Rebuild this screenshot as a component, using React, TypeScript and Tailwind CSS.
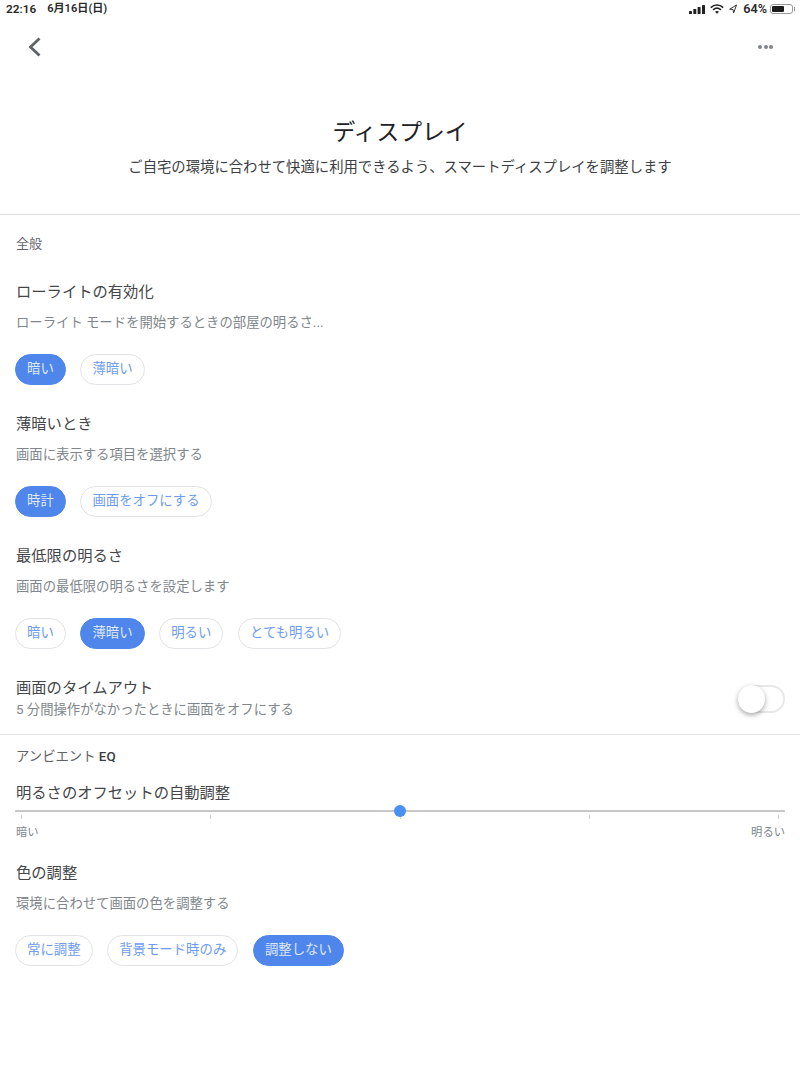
import { ReactNode } from "react";

const font = { jp: "font-['Roboto','Noto_Sans_CJK_JP',sans-serif]" };

function Chip({ label, on }: { label: string; on?: boolean }) {
    return (
        <div
            className={
                on
                    ? "h-[31px] px-3 rounded-full bg-[#4f86ec] border border-[#4f86ec] text-[#dfe9fb] text-[13.4px] flex items-center"
                    : "h-[31px] px-3 rounded-full bg-white border border-[#e2e3e6] text-[#6d9cf0] text-[13.4px] flex items-center"
            }
        >
            <span className="mx-[-1px]">{label}</span>
        </div>
    );
}

function Setting({
    title,
    desc,
    children,
}: {
    title: string;
    desc: string;
    children: ReactNode;
}) {
    return (
        <div className="px-[15px] h-[132px] flex flex-col">
            <div className="pl-[1px] h-[22px] leading-[22px] text-[15.3px] text-[#444649]">
                {title}
            </div>
            <div className="pl-[1px] mt-[10px] h-[20px] leading-[20px] text-[13.35px] text-[#80868b]">
                {desc}
            </div>
            <div className="mt-[21px] flex gap-[14.6px]">{children}</div>
        </div>
    );
}

export default function App() {
    return (
        <div
            className={`w-[800px] h-[1066px] bg-white overflow-hidden ${font.jp}`}
        >
            {/* status bar */}
            <div className="h-[19px] pl-[6px] pr-[5px] flex items-center justify-between text-[11.8px] font-semibold text-[#2a2a2a]">
                <div className="flex items-center gap-[11px]">
                    <span>22:16</span>
                    <span className="text-[11.1px]">6月16日(日)</span>
                </div>
                <div className="flex items-center">
                    <svg width="16" height="9" viewBox="0 0 16 9">
                        <rect x="0" y="6" width="3" height="3" rx="0.6" fill="#222" />
                        <rect x="4.3" y="4" width="3" height="5" rx="0.6" fill="#222" />
                        <rect x="8.6" y="2" width="3" height="7" rx="0.6" fill="#222" />
                        <rect x="13" y="0" width="3" height="9" rx="0.6" fill="#222" />
                    </svg>
                    <svg className="ml-[5px]" width="14" height="10" viewBox="0 0 14 10" fill="none" stroke="#222" strokeWidth="1.6">
                        <path d="M0.8 3.6C4.4 0.2 9.6 0.2 13.2 3.6" />
                        <path d="M3.1 5.8C5.4 3.8 8.6 3.8 10.9 5.8" />
                        <path d="M7 9.8L5 7.7C6.2 6.8 7.8 6.8 9 7.7Z" fill="#222" stroke="none" />
                    </svg>
                    <svg className="ml-[5px]" width="8" height="10" viewBox="0 0 8 10" fill="none" stroke="#333" strokeWidth="1">
                        <path d="M7.5 1L0.7 5.2L4 5.5L4.6 9Z" />
                    </svg>
                    <span className="ml-[6px] text-[12.6px]">64%</span>
                    <div className="ml-[3px] flex items-center">
                        <div className="w-[23px] h-[10px] rounded-[3px] border border-[#999] p-[1px]">
                            <div className="w-[64%] h-full rounded-[1px] bg-[#1c1c1c]" />
                        </div>
                        <div className="w-[1px] h-[4px] bg-[#999] ml-[1px]" />
                    </div>
                </div>
            </div>

            {/* nav */}
            <div className="h-[55px] pl-[28px] pr-[27px] flex items-center justify-between">
                <svg width="14" height="20" viewBox="0 0 14 20" fill="none" stroke="#5f6368" strokeWidth="2.8">
                    <path d="M11.5 1.5L2.5 10L11.5 18.5" />
                </svg>
                <div className="flex gap-[1.5px]">
                    <div className="w-[4px] h-[4px] rounded-full bg-[#80858a]" />
                    <div className="w-[4px] h-[4px] rounded-full bg-[#80858a]" />
                    <div className="w-[4px] h-[4px] rounded-full bg-[#80858a]" />
                </div>
            </div>

            {/* heading */}
            <div className="h-[141px] border-b border-[#dadce0] pt-[41px] text-center">
                <div className="h-[36px] leading-[36px] text-[22.8px] text-[#202124]">
                    ディスプレイ
                </div>
                <div className="mt-[5px] leading-[24px] text-[14.35px] text-[#3c4043]">
                    ご自宅の環境に合わせて快適に利用できるよう、スマートディスプレイを調整します
                </div>
            </div>

            <div className="h-[66px] px-[16px] pt-[19px] leading-[20px] text-[13px] text-[#5f6368]">
                全般
            </div>

            <Setting
                title="ローライトの有効化"
                desc="ローライト モードを開始するときの部屋の明るさ..."
            >
                <Chip label="暗い" on />
                <Chip label="薄暗い" />
            </Setting>
            <Setting title="薄暗いとき" desc="画面に表示する項目を選択する">
                <Chip label="時計" on />
                <Chip label="画面をオフにする" />
            </Setting>
            <Setting title="最低限の明るさ" desc="画面の最低限の明るさを設定します">
                <Chip label="暗い" />
                <Chip label="薄暗い" on />
                <Chip label="明るい" />
                <Chip label="とても明るい" />
            </Setting>

            {/* timeout row */}
            <div className="h-[58px] border-b border-[#e0e0e0] px-[16px] flex justify-between">
                <div>
                    <div className="h-[22px] leading-[22px] mb-[2px] text-[15.3px] text-[#444649]">
                        画面のタイムアウト
                    </div>
                    <div className="leading-[18px] text-[13.35px] text-[#80868b]">
                        5 分間操作がなかったときに画面をオフにする
                    </div>
                </div>
                <div className="relative mr-[-0.5px] w-[47px] h-[28px] rounded-full border-2 border-[#e8e8e8] mt-[8px]">
                    <div className="absolute left-[-2px] top-[-2px] w-[27px] h-[28px] rounded-full bg-white shadow-[0_2px_5px_rgba(0,0,0,0.35)]" />
                </div>
            </div>

            <div className="h-[49px] px-[16px] pt-[12px] leading-[20px] text-[13.35px] text-[#5f6368]">
                アンビエント <span className="font-medium text-[#3c4043]">EQ</span>
            </div>

            {/* slider */}
            <div className="px-[15px] h-[78px]">
                <div className="pl-[1px] h-[18px] leading-[18px] text-[15.3px] text-[#444649]">
                    明るさのオフセットの自動調整
                </div>
                <div className="relative mt-[8px] h-[2px] bg-[#c8c8c8]">
                    <div className="absolute left-[379px] top-[-5px] w-[12px] h-[12px] rounded-full bg-[#4a90ee]" />
                </div>
                <div className="mt-[3px] flex justify-between px-[6px]">
                    {[0, 1, 2, 3, 4].map((i) => (
                        <div key={i} className="w-[1px] h-[4px] bg-[#d0d0d0]" />
                    ))}
                </div>
                <div className="pl-[1px] mt-[6px] flex justify-between leading-[16px] text-[11.3px] text-[#80868b]">
                    <span>暗い</span>
                    <span>明るい</span>
                </div>
            </div>

            <Setting title="色の調整" desc="環境に合わせて画面の色を調整する">
                <Chip label="常に調整" />
                <Chip label="背景モード時のみ" />
                <Chip label="調整しない" on />
            </Setting>
        </div>
    );
}
